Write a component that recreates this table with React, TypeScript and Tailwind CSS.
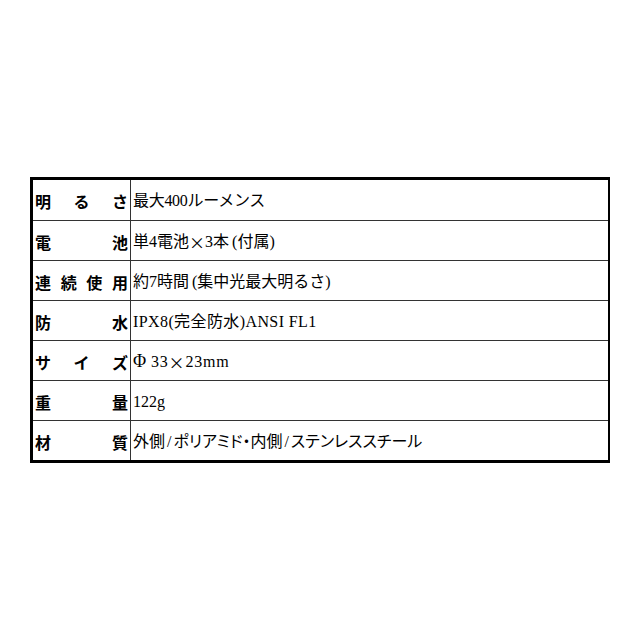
import React from 'react';

const cjk = { fontFamily: '"Noto Sans CJK JP", sans-serif' };

const X = () => <span style={cjk}>×</span>;

const rows: { label: string[]; value: React.ReactNode; track: string }[] = [
  { label: ['明', 'る', 'さ'], value: '最大400ルーメンス', track: 'tracking-[-0.3px]' },
  {
    label: ['電', '池'],
    value: (
      <>
        単4電池<X />3本<span className="ml-[3px]">(</span>付属)
      </>
    ),
    track: 'tracking-[0px]',
  },
  {
    label: ['連', '続', '使', '用'],
    value: (
      <>
        約7時間<span className="ml-[3px]">(</span>集中光最大明るさ)
      </>
    ),
    track: 'tracking-[0px]',
  },
  { label: ['防', '水'], value: 'IPX8(完全防水)ANSI FL1', track: 'tracking-[0.4px]' },
  {
    label: ['サ', 'イ', 'ズ'],
    value: (
      <>
        <span className="mr-[4px] text-[18px]">Φ</span>33<X />23mm
      </>
    ),
    track: 'tracking-[0.8px]',
  },
  { label: ['重', '量'], value: '122g', track: 'tracking-[0px]' },
  {
    label: ['材', '質'],
    value: (
      <>
        外側<span className="mx-[2px]">/</span>ポリアミド・内側<span className="mx-[2px]">/</span>ステンレススチール
      </>
    ),
    track: "tracking-[0px] [font-feature-settings:'palt']",
  },
];

const App: React.FC = () => {
  return (
    <div className="w-[640px] h-[640px] bg-white pt-[177px] pl-[30px]">
      <div className="w-[580px] border-[3px] border-black border-r-2">
        {rows.map((r, i) => (
          <div key={i} className={`flex h-[40px] ${i > 0 ? 'border-t border-[#333]' : ''}`}>
            <div
              className="w-[98px] shrink-0 border-r border-[#333] flex items-center justify-between px-[2px] pt-[2px] text-[16px] font-bold text-black"
              style={cjk}
            >
              {r.label.map((c, j) => (
                <span key={j}>{c}</span>
              ))}
            </div>
            <div
              className={`flex items-center pl-[2px] pt-[2px] text-[16px] text-black whitespace-pre ${r.track}`}
              style={{ fontFamily: '"Liberation Serif", "Noto Sans CJK JP", serif' }}
            >
              {r.value}
            </div>
          </div>
        ))}
      </div>
    </div>
  );
};

export default App;
